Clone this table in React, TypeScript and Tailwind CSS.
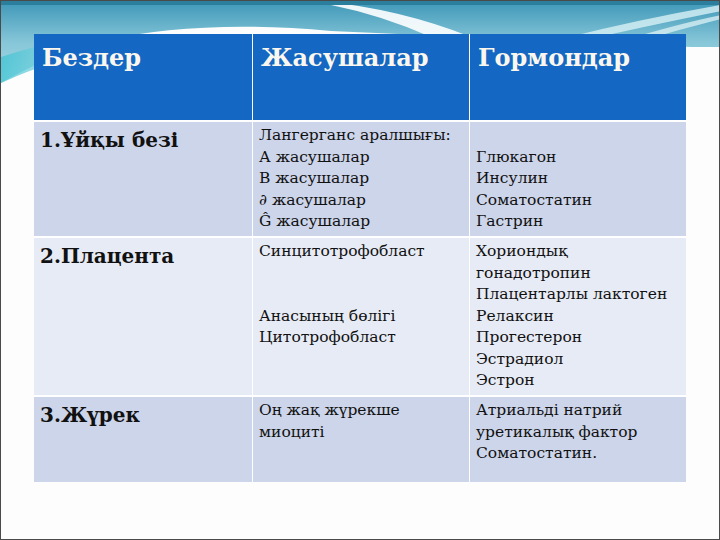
export default function App() {
  const serif = "font-['DejaVu_Serif','Liberation_Serif',serif]";

  const rows = [
    {
      label: "1.Ұйқы безі",
      cells: ["Лангерганс аралшығы:", "А жасушалар", "В жасушалар", "∂ жасушалар", "Ĝ жасушалар"],
      hormones: ["", "Глюкагон", "Инсулин", "Соматостатин", "Гастрин"],
      bg: "bg-[#cdd5ea]",
      h: "h-[114px]",
    },
    {
      label: "2.Плацента",
      cells: ["Синцитотрофобласт", "", "", "Анасының бөлігі", "Цитотрофобласт"],
      hormones: [
        "Хориондық",
        "гонадотропин",
        "Плацентарлы лактоген",
        "Релаксин",
        "Прогестерон",
        "Эстрадиол",
        "Эстрон",
      ],
      bg: "bg-[#e7ebf5]",
      h: "h-[157px]",
    },
    {
      label: "3.Жүрек",
      cells: ["Оң жақ жүрекше", "миоциті"],
      hormones: ["Атриальді натрий", "уретикалық фактор", "Соматостатин."],
      bg: "bg-[#cdd5ea]",
      h: "h-[85px]",
    },
  ];

  return (
    <div className="relative w-[720px] h-[540px] overflow-hidden bg-[#fdfdfd] border border-[#4a4a4a]">
      {/* slide background swoosh */}
      <svg className="absolute inset-0" width="720" height="540" viewBox="0 0 720 540">
        <defs>
          <linearGradient id="band" x1="0" y1="0" x2="0" y2="1">
            <stop offset="0" stopColor="#3e97b8" />
            <stop offset="0.5" stopColor="#86c6d8" />
            <stop offset="1" stopColor="#a9dce6" />
          </linearGradient>
          <linearGradient id="wedge" x1="0" y1="0" x2="1" y2="0">
            <stop offset="0" stopColor="#38c2d2" />
            <stop offset="1" stopColor="#8fd3df" />
          </linearGradient>
        </defs>
        <path d="M0 0 H720 V46 L690 46 L330 30 Q200 18 100 40 Q40 58 0 82 Z" fill="url(#band)" />
        <path d="M0 56 Q30 46 60 40 L60 60 Q30 68 0 82 Z" fill="url(#wedge)" opacity="0.7" />
        <path d="M320 0 Q400 8 470 36 L430 36 Q380 14 330 4 Z" fill="#ffffff" opacity="0.9" />
        <path d="M560 38 Q640 18 720 4 L720 10 Q640 26 580 40 Z" fill="#d8f1f5" opacity="0.8" />
        <path d="M620 40 Q680 22 720 14 L720 18 Q680 28 640 40 Z" fill="#e6f6f8" opacity="0.7" />
        <path d="M0 0 H720 V4 H0 Z" fill="#2b7f9c" />
      </svg>

      <div className={`absolute left-[33px] top-[33px] w-[652px] bg-white ${serif}`}>
        <div className="grid grid-cols-[218px_216px_216px] gap-x-[1px] gap-y-[2px]">
          {["Бездер", "Жасушалар", "Гормондар"].map((t) => (
            <div key={t} className="h-[86px] bg-[#1467c2] px-[8px] pt-[9px] text-[24px] leading-[30px] font-bold text-[#fbf7ee]">
              {t}
            </div>
          ))}
          {rows.map((r) => (
            <>
              <div key={r.label + "a"} className={`${r.h} ${r.bg} px-[6px] pt-[5px] text-[20px] leading-[26px] font-bold text-[#111]`}>
                {r.label}
              </div>
              <div key={r.label + "b"} className={`${r.h} ${r.bg} px-[6px] pt-[3px] text-[15.5px] leading-[21.5px] text-[#111]`}>
                {r.cells.map((c, i) => (
                  <div key={i} className="h-[21.5px] whitespace-nowrap">{c}</div>
                ))}
              </div>
              <div key={r.label + "c"} className={`${r.h} ${r.bg} px-[6px] pt-[3px] text-[15.5px] leading-[21.5px] text-[#111]`}>
                {r.hormones.map((c, i) => (
                  <div key={i} className="h-[21.5px] whitespace-nowrap">{c}</div>
                ))}
              </div>
            </>
          ))}
        </div>
      </div>
    </div>
  );
}
